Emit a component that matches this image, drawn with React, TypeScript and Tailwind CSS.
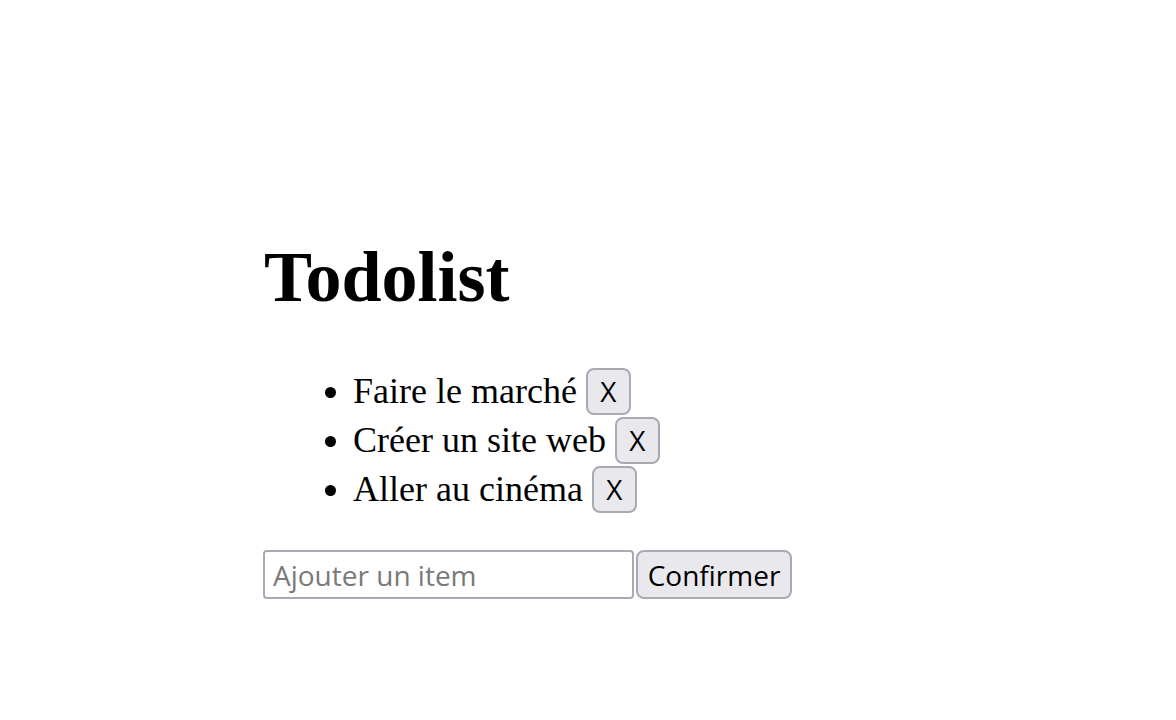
import { useState } from 'react'

const BTN = 'inline-flex items-center justify-center bg-[#e9e9ed] border-2 border-[#a9a9b4] rounded-[8px] text-black font-medium font-["Open_Sans",sans-serif]'

export default function App() {
  const [items, setItems] = useState(['Faire le marché', 'Créer un site web', 'Aller au cinéma'])
  const [value, setValue] = useState('')

  function add() {
    if (!value.trim()) return
    setItems([...items, value.trim()])
    setValue('')
  }

  return (
    <div className="min-h-[720px] bg-white text-black pl-[263px] pt-[236px] font-['Liberation_Serif',serif]">
      <h1 className="text-[72px] leading-[82px] font-bold ml-[1px]">Todolist</h1>

      <ul className="list-disc pl-[90px] mt-[49px] text-[36px]">
        {items.map((item, i) => (
          <li key={i} className="h-[49px] leading-[49px]">
            {item}{' '}
            <button
              type="button"
              onClick={() => setItems(items.filter((_, j) => j !== i))}
              className={`${BTN} w-[45px] h-[47px] text-[28px] align-middle -mt-[7px]`}
            >
              X
            </button>
          </li>
        ))}
      </ul>

      <div className="flex mt-[36px] gap-[2px]">
        <input
          value={value}
          onChange={e => setValue(e.target.value)}
          placeholder="Ajouter un item"
          className="w-[371px] h-[49px] border-2 border-[#a9a9b4] rounded-[4px] px-[8px] text-[28px] font-['Open_Sans',sans-serif] placeholder:text-[#7a7a7a] outline-none"
        />
        <button type="button" onClick={add} className={`${BTN} w-[156px] h-[49px] text-[28px]`}>
          Confirmer
        </button>
      </div>
    </div>
  )
}
